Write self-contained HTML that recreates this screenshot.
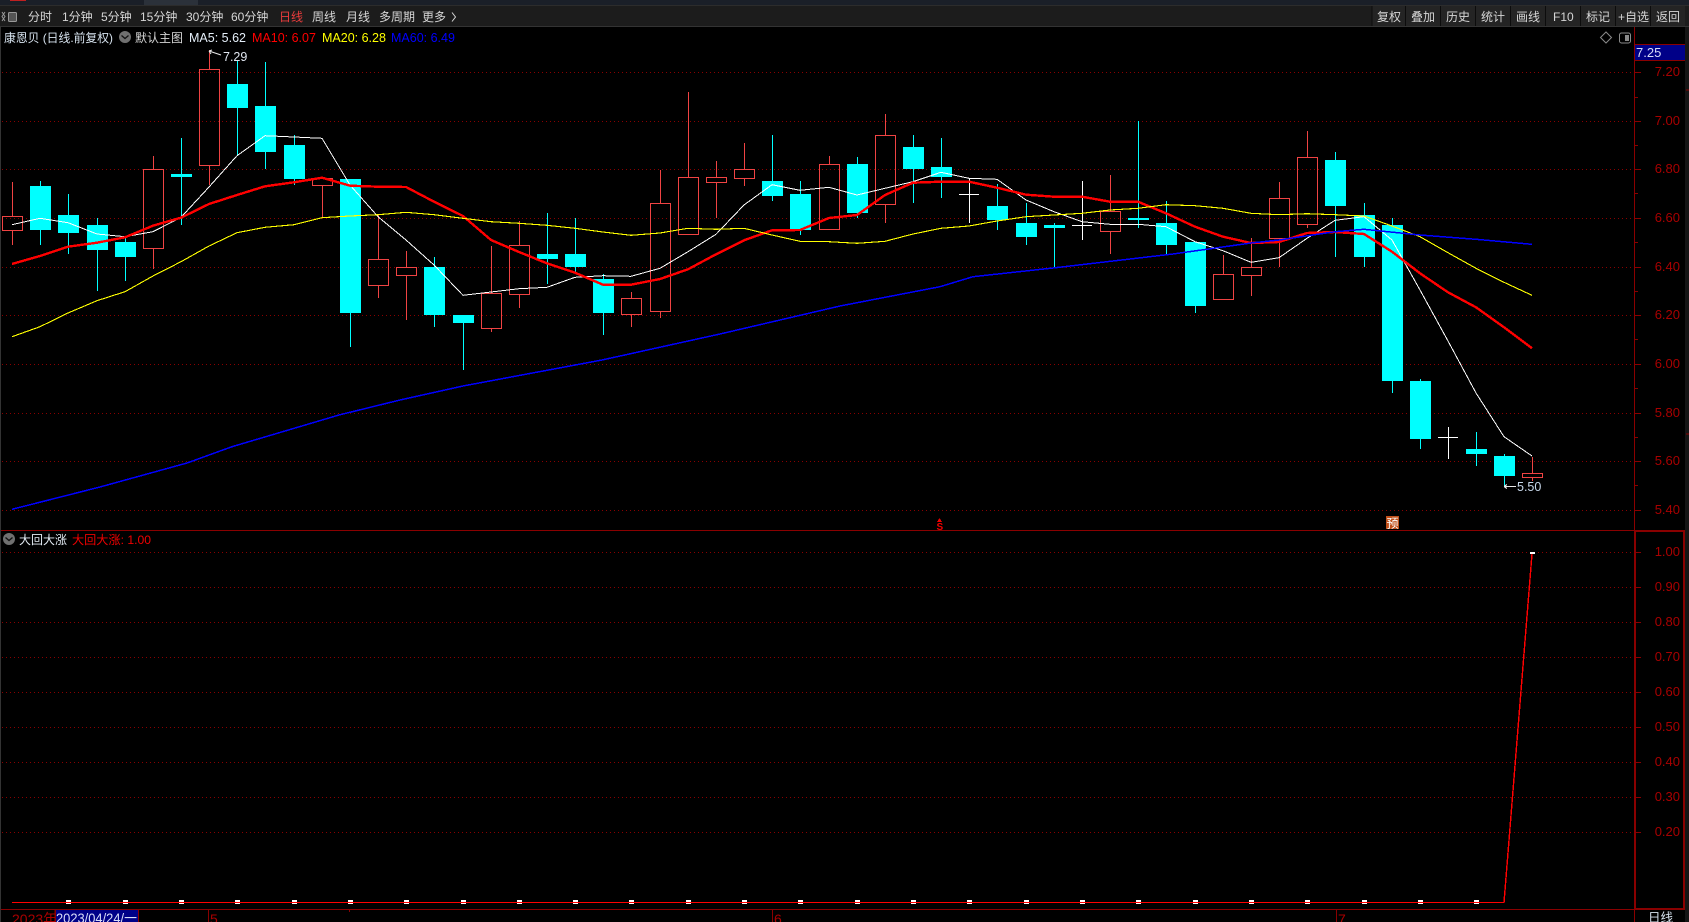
<!DOCTYPE html>
<html><head><meta charset="utf-8"><title>康恩贝</title>
<style>
html,body{margin:0;padding:0;background:#000;width:1689px;height:922px;overflow:hidden}
svg{display:block;position:absolute;left:0;top:0}
text{font-family:"Liberation Sans","Noto Sans CJK SC",sans-serif;font-size:12.5px;white-space:pre}
.tb text{fill:#d6d6d6;font-size:12px}
.ax{fill:#a80000;font-size:13px;text-anchor:end}
.ax text{font-size:13px}
.c{shape-rendering:crispEdges}
</style></head><body>
<svg width="1689" height="922" viewBox="0 0 1689 922" xmlns="http://www.w3.org/2000/svg">
<rect width="1689" height="922" fill="#000"/>
<!-- title strip + toolbar -->
<g class="c">
<rect x="0" y="0" width="1689" height="5" fill="#1a1f28"/>
<rect x="10" y="0" width="16" height="1" fill="#c02020"/>
<rect x="144" y="0" width="54" height="5" fill="#2b313a"/>
<rect x="0" y="5" width="1689" height="1" fill="#2c2c2c"/>
<rect x="0" y="6" width="1689" height="20" fill="#1c1c1c"/>
<rect x="0" y="26" width="1689" height="1" fill="#333"/>
<rect x="1372" y="6" width="313" height="20" fill="#242424"/>
<path d="M1372 6v20M1405.500 6v20M1440.500 6v20M1475.500 6v20M1510.500 6v20M1545.500 6v20M1580.500 6v20M1615.500 6v20M1650.500 6v20" stroke="#0c0c0c" stroke-width="1" fill="none"/>
<rect x="0" y="27" width="1" height="895" fill="#333"/>
<rect x="1685" y="27" width="4" height="895" fill="#151515"/>
</g>
<!-- toolbar left icon -->
<path d="M5 12l-3 4.500 3 4.500M2 12l3 4.500-3 4.500" fill="none" stroke="#999" stroke-width="1"/>
<rect x="8.500" y="12.500" width="8" height="9" rx="1" fill="#555" stroke="#999"/>
<g class="tb">
<text x="28" y="21">分时</text><text x="62" y="21">1分钟</text><text x="101" y="21">5分钟</text><text x="140" y="21">15分钟</text><text x="186" y="21">30分钟</text><text x="231" y="21">60分钟</text>
<text x="279" y="21" style="fill:#e83c3c">日线</text>
<text x="312" y="21">周线</text><text x="346" y="21">月线</text><text x="379" y="21">多周期</text><text x="422" y="21">更多</text>
<text x="1377" y="21">复权</text><text x="1411" y="21">叠加</text><text x="1446" y="21">历史</text><text x="1481" y="21">统计</text><text x="1516" y="21">画线</text><text x="1553" y="21">F10</text><text x="1586" y="21">标记</text><text x="1618" y="21">+自选</text><text x="1656" y="21">返回</text>
</g>
<path d="M452 12.500l3.500 4.500-3.500 4.500" fill="none" stroke="#d6d6d6" stroke-width="1"/>
<!-- grid -->
<path d="M2 72.500H1634M2 121.500H1634M2 169.500H1634M2 218.500H1634M2 267.500H1634M2 315.500H1634M2 364.500H1634M2 413.500H1634M2 461.500H1634M2 510.500H1634M2 552.500H1634M2 587.500H1634M2 622.500H1634M2 657.500H1634M2 692.500H1634M2 727.500H1634M2 762.500H1634M2 797.500H1634M2 832.500H1634" stroke="#8a0000" stroke-width="1" stroke-dasharray="1 3" fill="none" class="c"/>
<!-- axis -->
<g class="c" fill="none" stroke="#8a0000">
<path d="M1634.500 27V909"/>
<path d="M1635 72.500h6M1635 121.500h6M1635 169.500h6M1635 218.500h6M1635 267.500h6M1635 315.500h6M1635 364.500h6M1635 413.500h6M1635 461.500h6M1635 510.500h6M1635 552.500h6M1635 587.500h6M1635 622.500h6M1635 657.500h6M1635 692.500h6M1635 727.500h6M1635 762.500h6M1635 797.500h6M1635 832.500h6"/>
<path d="M1635 97.500h3M1635 145.500h3M1635 193.500h3M1635 242.500h3M1635 291.500h3M1635 339.500h3M1635 388.500h3M1635 437.500h3M1635 485.500h3"/>
<path d="M1 530.500H1685" stroke-width="1"/>
<path d="M1635 531h49v378h-49z" stroke-width="2"/>
<path d="M1 909.500H1685" stroke-width="1"/>
<path d="M1634.500 910V922M55 910V922M138 910V922M208.500 910V922M772.500 910V922M1336.500 910V922"/>
<path d="M349.500 909v3M1686 90h3M1686 434h3"/>
</g>
<rect class="c" x="1635" y="44" width="50" height="16" fill="#000088"/>
<path class="c" d="M1634 44.500H1685M1634 60.500H1685" stroke="#8a0000" fill="none"/>
<text x="1636" y="57" style="fill:#d8dcf8;font-size:13px">7.25</text>
<g class="ax">
<text x="1680" y="76">7.20</text><text x="1680" y="125">7.00</text><text x="1680" y="173">6.80</text><text x="1680" y="222">6.60</text><text x="1680" y="271">6.40</text><text x="1680" y="319">6.20</text><text x="1680" y="368">6.00</text><text x="1680" y="417">5.80</text><text x="1680" y="465">5.60</text><text x="1680" y="514">5.40</text>
<text x="1680" y="556">1.00</text><text x="1680" y="591">0.90</text><text x="1680" y="626">0.80</text><text x="1680" y="661">0.70</text><text x="1680" y="696">0.60</text><text x="1680" y="731">0.50</text><text x="1680" y="766">0.40</text><text x="1680" y="801">0.30</text><text x="1680" y="836">0.20</text>
</g>
<!-- top right icons -->
<path d="M1606 32l5.500 5.500-5.500 5.500-5.500-5.500z" fill="none" stroke="#8a8a8a"/>
<rect x="1619.500" y="33" width="11" height="10" rx="2" fill="none" stroke="#8a8a8a"/>
<rect x="1625" y="35" width="4" height="6" fill="#8a8a8a"/>
<!-- info line -->
<text x="4" y="42" textLength="109" lengthAdjust="spacingAndGlyphs" style="fill:#d6e2ee;font-size:12px">康恩贝 (日线.前复权)</text>
<circle cx="125" cy="37" r="6" fill="#707070"/><path d="M121.500 35.500l3.500 3 3.500-3" fill="none" stroke="#111" stroke-width="1.300"/>
<text x="135" y="42" style="fill:#d6d6d6;font-size:12px">默认主图</text>
<text x="189" y="42" style="fill:#e4eef8">MA5: 5.62</text>
<text x="252" y="42" style="fill:#ff0000">MA10: 6.07</text>
<text x="322" y="42" style="fill:#ffff00">MA20: 6.28</text>
<text x="391" y="42" style="fill:#0000ff">MA60: 6.49</text>
<!-- candles -->
<path class="c" fill="#00ffff" d="M40 181h1v64h-1zM30 186h21v44h-21zM68 194h1v60h-1zM58 215h21v18h-21zM97 218h1v73h-1zM87 225h21v25h-21zM125 238h1v43h-1zM115 242h21v15h-21zM181 138h1v87h-1zM171 174h21v3h-21zM237 60h1v96h-1zM227 84h21v24h-21zM265 62h1v107h-1zM255 106h21v46h-21zM294 135h1v50h-1zM284 145h21v34h-21zM350 179h1v168h-1zM340 179h21v134h-21zM434 257h1v70h-1zM424 267h21v48h-21zM463 315h1v55h-1zM453 315h21v8h-21zM547 213h1v71h-1zM537 254h21v5h-21zM575 218h1v54h-1zM565 254h21v13h-21zM603 274h1v61h-1zM593 279h21v34h-21zM772 135h1v66h-1zM762 181h21v15h-21zM800 181h1v54h-1zM790 194h21v36h-21zM857 157h1v61h-1zM847 164h21v49h-21zM913 135h1v68h-1zM903 147h21v22h-21zM941 138h1v60h-1zM931 167h21v10h-21zM997 184h1v46h-1zM987 206h21v14h-21zM1026 203h1v42h-1zM1016 223h21v14h-21zM1054 223h1v44h-1zM1044 225h21v3h-21zM1138 121h1v107h-1zM1128 218h21v2h-21zM1166 201h1v53h-1zM1156 223h21v22h-21zM1195 242h1v71h-1zM1185 242h21v64h-21zM1335 152h1v105h-1zM1325 160h21v46h-21zM1364 203h1v64h-1zM1354 215h21v42h-21zM1392 218h1v175h-1zM1382 225h21v156h-21zM1420 379h1v70h-1zM1410 381h21v58h-21zM1476 432h1v34h-1zM1466 449h21v5h-21zM1504 454h1v32h-1zM1494 456h21v20h-21z"/>
<path class="c" fill="none" stroke="#f04343" stroke-width="1" d="M12.500 182V216M12.500 230V245M2.500 216.500h20v14h-20zM153.500 156V169M153.500 248V269M143.500 169.500h20v79h-20zM209.500 50V69M209.500 165V185M199.500 69.500h20v96h-20zM322.500 177V178M322.500 185V217M312.500 178.500h20v7h-20zM378.500 215V259M378.500 285V298M368.500 259.500h20v26h-20zM406.500 251V267M406.500 275V320M396.500 267.500h20v8h-20zM491.500 246V293M491.500 328V332M481.500 293.500h20v35h-20zM519.500 221V245M519.500 294V308M509.500 245.500h20v49h-20zM631.500 292V298M631.500 314V327M621.500 298.500h20v16h-20zM660.500 170V203M660.500 311V318M650.500 203.500h20v108h-20zM688.500 92V177M678.500 177.500h20v57h-20zM716.500 161V177M716.500 182V218M706.500 177.500h20v5h-20zM744.500 143V169M744.500 178V186M734.500 169.500h20v9h-20zM829.500 156V164M829.500 229V230M819.500 164.500h20v65h-20zM885.500 114V135M885.500 204V223M875.500 135.500h20v69h-20zM1110.500 175V211M1110.500 231V254M1100.500 211.500h20v20h-20zM1223.500 255V274M1213.500 274.500h20v25h-20zM1251.500 238V267M1251.500 275V296M1241.500 267.500h20v8h-20zM1279.500 182V198M1279.500 238V267M1269.500 198.500h20v40h-20zM1307.500 131V157M1307.500 224V228M1297.500 157.500h20v67h-20zM1532.500 457V473M1532.500 477V481M1522.500 473.500h20v4h-20z"/>
<path class="c" fill="none" stroke="#ffffff" stroke-width="1" d="M969.500 178V223M959 194.500h20M1082.500 181V240M1072 225.500h20M1448.500 427V459M1438 437.500h20"/>
<!-- MA lines -->
<polyline class="c" fill="none" stroke="#ffffff" stroke-width="1" points="12,224.700 40,218.300 68,222.700 97,234 125,236.700 153,231.700 181,217.300 209,187 237,155.700 265,135.700 294,137 322,138.300 350,185 378,216.700 406,240 434,265 463,295.300 491,292 519,288.700 547,287.300 575,277.300 603,275.700 631,276.300 660,268.300 688,251.700 716,234.300 744,205 772,184.700 800,190.300 829,187.300 857,195 885,188.300 913,181.700 941,172.300 969,178.300 997,179.300 1026,200 1054,211.700 1082,221.700 1110,224.300 1138,224.300 1166,226.700 1195,241.700 1223,250.700 1251,262.300 1279,257.700 1307,238.300 1335,220.300 1364,216.700 1392,240 1420,290 1448,341 1476,393 1504,436.700 1532,456"/>
<polyline class="c" fill="none" stroke="#ff0000" stroke-width="2.400" points="12,264 40,256 68,246.700 97,242.700 125,237.300 153,225.700 181,217.700 209,204 237,195 265,186.300 294,182.300 322,177.700 350,185.700 378,186.700 406,187 434,201.700 463,216 491,240 519,252 547,263.300 575,272.700 603,284.700 631,284.700 660,279 688,269.300 716,254.300 744,240.300 772,230.300 800,230 829,218 857,215 885,195 913,182.700 941,181.700 969,181.700 997,187.700 1026,194.700 1054,196.700 1082,196.700 1110,201.700 1138,201.700 1166,213.300 1195,226.700 1223,236.700 1251,243 1279,242 1307,233 1335,232 1364,234 1392,251.700 1420,273.300 1448,292.300 1476,307.300 1504,327.300 1532,348.300"/>
<polyline class="c" fill="none" stroke="#ffff00" stroke-width="1.100" points="12,336.700 40,326.700 68,313 97,300.700 125,291.700 153,276 181,261.700 209,246 237,232.700 265,227.300 294,224.700 322,217.700 350,216 378,214.700 406,212.300 434,214.700 463,218.300 491,221.700 519,223.300 547,225.300 575,228.300 603,232 631,235.300 660,233 688,228.300 716,229.300 744,228.300 772,235 800,241.300 829,241.700 857,243.300 885,241.300 913,234 941,228.300 969,226 997,221 1026,216.700 1054,215 1082,213.300 1110,210 1138,208.300 1166,204.700 1195,205.700 1223,208.300 1251,213.300 1279,214.700 1307,213.700 1335,214.700 1364,216 1392,226 1420,236.700 1448,252.700 1476,268.300 1504,282.300 1532,295.300"/>
<polyline class="c" fill="none" stroke="#0000ff" stroke-width="1.500" points="12,509.300 100,487 187,463 232,446.700 339,415 400,400 463,386 602,360 720,334 840,306 940,286.700 973,276.700 1053,268 1107,261.700 1173,254 1251,243 1279,240 1335,231.700 1364,229.300 1420,235 1476,239.300 1532,244.300"/>
<!-- hi/lo labels -->
<path d="M209 51l12 4M209 51l3 -1M209 51l2 3" fill="none" stroke="#e8e8e8" stroke-width="1"/>
<text x="223" y="61" style="fill:#e0e6f0">7.29</text>
<path class="c" d="M1504 486.500h12M1504 486.500l3-2M1504 486.500l3 2" fill="none" stroke="#e8e8e8" stroke-width="1"/>
<text x="1517" y="491" style="fill:#c8d8ea">5.50</text>
<!-- S and 预 markers -->
<path class="c" d="M937 522l2.500-4 2.500 4z" fill="#f00000"/>
<text x="936.500" y="530" style="fill:#f00000;font-size:10px;font-weight:bold">S</text>
<rect class="c" x="1386" y="516" width="13" height="13" fill="#c0501a"/>
<text x="1386.500" y="527.500" style="fill:#fff;font-size:12px">预</text>
<!-- lower panel -->
<circle cx="9" cy="539" r="6" fill="#707070"/><path d="M5.500 537.500l3.500 3 3.500-3" fill="none" stroke="#111" stroke-width="1.300"/>
<text x="19" y="544" style="fill:#e4ecf4;font-size:12px">大回大涨</text>
<text x="72" y="544" textLength="79" lengthAdjust="spacingAndGlyphs" style="fill:#f00000;font-size:12px">大回大涨: 1.00</text>
<path class="c" fill="#fff" d="M66 900h5v4h-5zM123 900h5v4h-5zM179 900h5v4h-5zM235 900h5v4h-5zM292 900h5v4h-5zM348 900h5v4h-5zM404 900h5v4h-5zM461 900h5v4h-5zM517 900h5v4h-5zM573 900h5v4h-5zM629 900h5v4h-5zM686 900h5v4h-5zM742 900h5v4h-5zM798 900h5v4h-5zM855 900h5v4h-5zM911 900h5v4h-5zM967 900h5v4h-5zM1024 900h5v4h-5zM1080 900h5v4h-5zM1136 900h5v4h-5zM1193 900h5v4h-5zM1249 900h5v4h-5zM1305 900h5v4h-5zM1362 900h5v4h-5zM1418 900h5v4h-5zM1474 900h5v4h-5zM1530 552h5v2h-5z"/>
<polyline class="c" fill="none" stroke="#ff0000" stroke-width="1.400" points="12,902.500 1504,902.500 1532,554"/>
<!-- bottom axis text -->
<text x="12" y="924" style="fill:#a80000;font-size:14px">2023年</text>
<rect class="c" x="55" y="910" width="83" height="12" fill="#000088"/>
<path class="c" d="M55.500 910V922M138.500 910V922" stroke="#8a0000" fill="none"/>
<text x="56" y="923" textLength="81" lengthAdjust="spacingAndGlyphs" style="fill:#d8dcf8;font-size:13.500px">2023/04/24/一</text>
<text x="210" y="924" style="fill:#a80000;font-size:14px">5</text>
<text x="774" y="924" style="fill:#a80000;font-size:14px">6</text>
<text x="1338" y="924" style="fill:#a80000;font-size:14px">7</text>
<text x="1648" y="922" style="fill:#d6e2ee">日线</text>
</svg>
</body></html>
